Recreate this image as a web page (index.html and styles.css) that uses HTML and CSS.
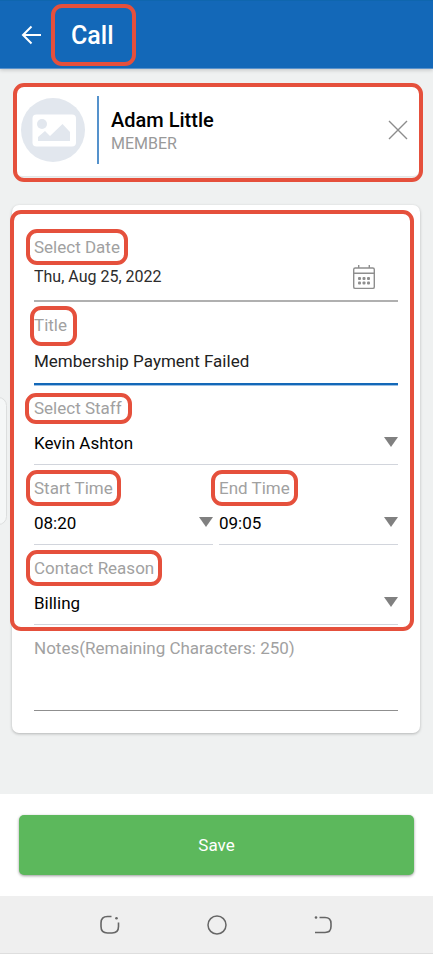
FILE: index.html
```html
<!DOCTYPE html>
<html lang="en">
<head>
<meta charset="utf-8">
<meta name="viewport" content="width=device-width, initial-scale=1">
<title>Call</title>
<link rel="stylesheet" href="styles.css">
</head>
<body>
<header class="app-bar">
  <button class="icon-button" type="button" aria-label="Back">
    <svg width="22" height="20" viewBox="0 0 22 20" fill="none" stroke="#fff" stroke-width="2"><path d="M20 10H2M10.5 1.500L2 10l8.500 8.500"/></svg>
  </button>
  <h1 class="app-title mark mark--title">Call</h1>
</header>

<main class="content">
  <section class="card member mark mark--member">
    <svg class="avatar" viewBox="0 0 64 64" aria-hidden="true">
      <circle cx="32" cy="32" r="32" fill="#e2e7ee"/>
      <rect x="11.500" y="16.500" width="43.500" height="32" rx="4" fill="#fff"/>
      <circle cx="21" cy="26" r="5" fill="#e2e7ee"/>
      <path d="M17 43v-4l7-6 5 5 12.500-12 7.500 8v9z" fill="#e2e7ee"/>
    </svg>
    <div class="member-text">
      <h2 class="member-name">Adam Little</h2>
      <p class="member-role">MEMBER</p>
    </div>
    <button class="icon-button" type="button" aria-label="Remove member">
      <svg width="20" height="20" viewBox="0 0 20 20" fill="none" stroke="#8c8c8c" stroke-width="1.4"><path d="M1 1l18 18M19 1L1 19"/></svg>
    </button>
  </section>

  <form class="card form" id="call-form">
    <div class="fields mark mark--form">
      <div class="field">
        <label class="label mark" for="date">Select Date</label>
        <div class="date-row">
          <input class="control control--date" id="date" type="text" value="Thu, Aug 25, 2022">
          <button class="icon-button" type="button" aria-label="Open calendar">
            <svg width="24" height="26" viewBox="0 0 24 26" fill="none" stroke="#8e8e8e" stroke-width="1.4">
              <rect x="1.7" y="4" width="20.6" height="20.4" rx="1.5"/><path d="M1.7 9.2h20.6M6.7 1v3M17.3 1v3"/>
              <g fill="#8e8e8e" stroke="none"><rect x="6" y="13" width="3" height="3" rx="1"/><rect x="10.5" y="13" width="3" height="3" rx="1"/><rect x="15" y="13" width="3" height="3" rx="1"/><rect x="6" y="17.5" width="3" height="3" rx="1"/><rect x="10.5" y="17.5" width="3" height="3" rx="1"/><rect x="15" y="17.5" width="3" height="3" rx="1"/></g>
            </svg>
          </button>
        </div>
      </div>

      <div class="field">
        <label class="label mark mark--tall" for="title">Title</label>
        <input class="control control--title" id="title" type="text" value="Membership Payment Failed">
      </div>

      <div class="field">
        <label class="label mark mark--short" for="staff">Select Staff</label>
        <div class="select">
          <select class="control" id="staff"><option>Kevin Ashton</option></select>
          <svg class="caret" viewBox="0 0 14 10" aria-hidden="true"><path d="M0 0h14L7 10z"/></svg>
        </div>
      </div>

      <div class="times">
        <div class="field">
          <label class="label mark" for="start">Start Time</label>
          <div class="select">
            <select class="control" id="start"><option>08:20</option></select>
            <svg class="caret" viewBox="0 0 14 10" aria-hidden="true"><path d="M0 0h14L7 10z"/></svg>
          </div>
        </div>
        <div class="field">
          <label class="label mark" for="end">End Time</label>
          <div class="select">
            <select class="control" id="end"><option>09:05</option></select>
            <svg class="caret" viewBox="0 0 14 10" aria-hidden="true"><path d="M0 0h14L7 10z"/></svg>
          </div>
        </div>
      </div>

      <div class="field">
        <label class="label mark" for="reason">Contact Reason</label>
        <div class="select">
          <select class="control" id="reason"><option>Billing</option></select>
          <svg class="caret" viewBox="0 0 14 10" aria-hidden="true"><path d="M0 0h14L7 10z"/></svg>
        </div>
      </div>
    </div>

    <div class="field">
      <label class="label" for="notes">Notes(Remaining Characters: 250)</label>
      <textarea class="notes" id="notes" maxlength="250"></textarea>
    </div>
  </form>
</main>

<div class="edge-handle"></div>

<footer class="actions">
  <button class="save" type="submit" form="call-form">Save</button>
</footer>

<nav class="system-nav" aria-label="System">
  <button class="icon-button" type="button" aria-label="Recent apps">
    <svg width="20" height="20" viewBox="0 0 20 20" fill="none" stroke="#666" stroke-width="1.600"><path d="M11.500 1.500H7.500Q1 1.500 1 8v3.500Q1 18 7.500 18h4.500q6.500 0 6.500-6.500V7.500"/><circle cx="16.500" cy="3.200" r="1.300" fill="#666" stroke="none"/></svg>
  </button>
  <button class="icon-button" type="button" aria-label="Home">
    <svg width="20" height="20" viewBox="0 0 20 20" fill="none" stroke="#666" stroke-width="1.500"><circle cx="10" cy="10" r="9"/></svg>
  </button>
  <button class="icon-button" type="button" aria-label="System back">
    <svg width="20" height="20" viewBox="0 0 20 20" fill="none" stroke="#666" stroke-width="1.600"><path d="M5.500 2.500H11q6 0 6 6v3q0 6-6 6H1"/><circle cx="2" cy="2.500" r="1.300" fill="#666" stroke="none"/></svg>
  </button>
</nav>
</body>
</html>
```
FILE: styles.css
```css
* {
  box-sizing: border-box;
}

body {
  margin: 0;
  min-height: 100vh;
  display: flex;
  flex-direction: column;
  position: relative;
  background: #eff1f1;
  color: #1c1c1c;
  font: 17px/20px Roboto, "Liberation Sans", sans-serif;
}

h1, h2, p {
  margin: 0;
}

button, input, select, textarea {
  font: inherit;
  color: inherit;
  border: 0;
  border-radius: 0;
  background: none;
  padding: 0;
  margin: 0;
  outline: 0;
}

.icon-button {
  display: flex;
  align-items: center;
  justify-content: center;
  flex: none;
}

svg {
  display: block;
}

/* Red call-out outlines drawn over the parts they point at */
.mark {
  position: relative;
}

.mark::after {
  content: "";
  position: absolute;
  inset: -8px;
  border: 4px solid #e5503c;
  border-radius: 11px;
  pointer-events: none;
}

.mark--title::after {
  inset: -14px -22px -15px -20px;
}

.mark--member::after {
  inset: -2px -3px -6px -2px;
}

.mark--form::after {
  inset: -27px -16px -6px -24px;
}

.mark--tall::after {
  inset: -9px -10px -11px -4px;
}

.mark--short::after {
  inset: -5px -10px -6px -9px;
}

.app-bar {
  display: flex;
  align-items: center;
  gap: 28px;
  height: 69px;
  padding: 0 21px;
  background: #1368b8;
  border-top: 1px solid #0f66ae;
  border-bottom: 1px solid #5a92cb;
  box-shadow: 0 1px 4px rgba(0, 0, 0, 0.2);
  color: #fff;
}

.app-title {
  padding-top: 3px;
  font-size: 25px;
  font-weight: 500;
  line-height: 30px;
}

.content {
  flex: 1;
  display: flex;
  flex-direction: column;
  gap: 29px;
  padding: 16px 13px 61px 12px;
}

.card {
  background: #fff;
  border-radius: 7px;
  box-shadow: 0 1px 3px rgba(0, 0, 0, 0.25);
}

.member {
  display: flex;
  align-items: center;
  min-height: 91px;
  margin-left: 3px;
  padding: 0 12px 2px 6px;
  box-shadow: 0 1px 2px rgba(0, 0, 0, 0.06);
}

.avatar {
  width: 64px;
  height: 64px;
  flex: none;
}

.member-text {
  flex: 1;
  margin-left: 12px;
  padding: 11px 0 9px 12px;
  border-left: 2px solid #5592cc;
}

.member-name {
  font-size: 20px;
  font-weight: 500;
  line-height: 26px;
  color: #000;
}

.member-role {
  font-size: 16px;
  line-height: 22px;
  color: #999;
}

.form {
  display: flex;
  flex-direction: column;
  gap: 13px;
  padding: 32px 22px 22px;
}

.fields {
  display: flex;
  flex-direction: column;
  gap: 13px;
}

.field {
  display: flex;
  flex-direction: column;
  align-items: stretch;
  min-width: 0;
}

.label {
  align-self: flex-start;
  color: #a1a1a1;
}

.control {
  width: 100%;
  min-width: 0;
  height: 47px;
  padding-top: 4px;
  border-bottom: 1px solid #d2d5dc;
  color: #000;
  appearance: none;
}

.date-row {
  display: flex;
  align-items: center;
  height: 45px;
  padding: 0 22px 4px 0;
  border-bottom: 2px solid #b0b0b0;
}

.control--date {
  height: 100%;
  padding: 0;
  border: 0;
  font-size: 16px;
  color: #2c2c2c;
}

.control--title {
  height: 50px;
  border-bottom: 2px solid #1368b8;
  box-shadow: 0 1px 0 #9cc0e4;
  color: #222;
}

.select {
  display: grid;
  align-items: center;
}

.select > * {
  grid-area: 1 / 1;
}

.caret {
  width: 14px;
  height: 10px;
  justify-self: end;
  fill: #808080;
  pointer-events: none;
}

.times {
  display: grid;
  grid-template-columns: 1fr 1fr;
  gap: 6px;
}

.notes {
  height: 53px;
  border-bottom: 1px solid #8f8f8f;
  resize: none;
}

.edge-handle {
  position: absolute;
  left: -10px;
  top: 397px;
  width: 17px;
  height: 128px;
  border: 1px solid #dcdede;
  border-radius: 12px;
  background: #f5f7f7;
}

.actions {
  display: flex;
  padding: 21px 19px;
  background: #fff;
}

.save {
  flex: 1;
  height: 60px;
  border-radius: 5px;
  background: #5cb85c;
  box-shadow: 0 1px 3px rgba(0, 0, 0, 0.4);
  color: #fff;
}

.system-nav {
  display: flex;
  justify-content: center;
  gap: 87px;
  height: 58px;
  background: #efefef;
  border-bottom: 1px solid #dedede;
}
```
